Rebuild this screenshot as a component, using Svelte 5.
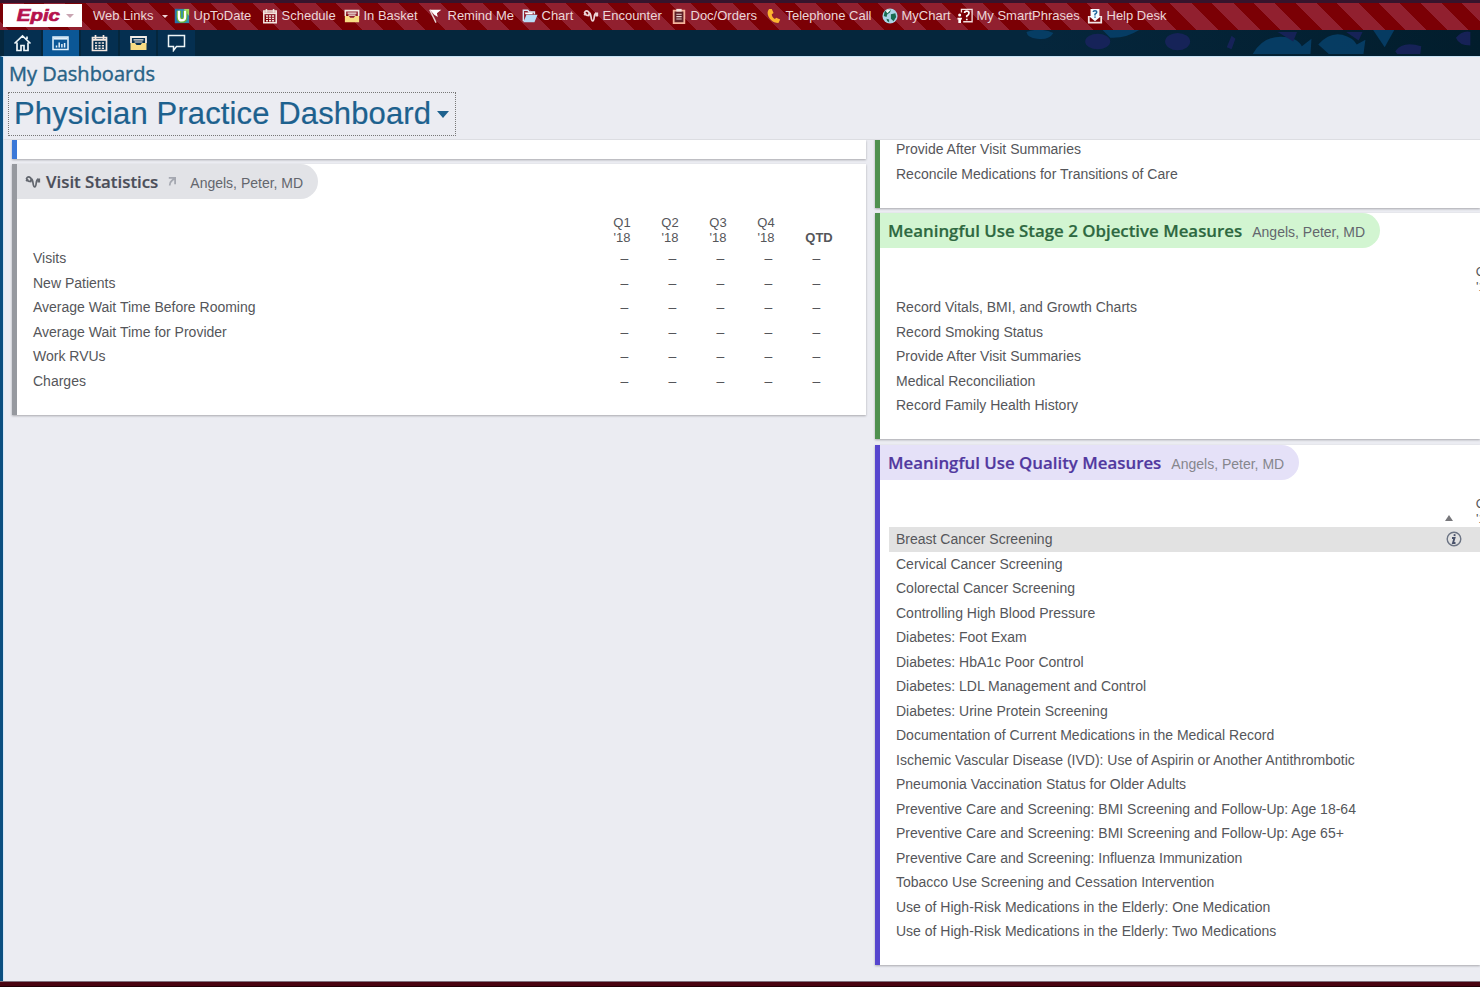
<script lang="ts">
	interface ICard {
		title: string;
		color: string;
		rows: string[];
	}

	const links = [
		{ icon: 'uptodate', label: 'UpToDate' },
		{ icon: 'calendar', label: 'Schedule' },
		{ icon: 'inbox', label: 'In Basket' },
		{ icon: 'flag', label: 'Remind Me' },
		{ icon: 'folder', label: 'Chart' },
		{ icon: 'stethoscope', label: 'Encounter' },
		{ icon: 'clipboard', label: 'Doc/Orders' },
		{ icon: 'phone', label: 'Telephone Call' },
		{ icon: 'globe', label: 'MyChart' },
		{ icon: 'phrases', label: 'My SmartPhrases' },
		{ icon: 'help', label: 'Help Desk' }
	];
	const tabs = ['home', 'dashboard', 'calendar', 'inbox', 'chat'];
	const provider = 'Angels, Peter, MD';
	const quarters = ['Q1', 'Q2', 'Q3', 'Q4'];
	const stats = [
		'Visits',
		'New Patients',
		'Average Wait Time Before Rooming',
		'Average Wait Time for Provider',
		'Work RVUs',
		'Charges'
	];
	const cards: ICard[] = [
		{
			title: 'Meaningful Use Stage 2 Objective Measures',
			color: 'green',
			rows: [
				'Record Vitals, BMI, and Growth Charts',
				'Record Smoking Status',
				'Provide After Visit Summaries',
				'Medical Reconciliation',
				'Record Family Health History'
			]
		},
		{
			title: 'Meaningful Use Quality Measures',
			color: 'purple',
			rows: [
				'Breast Cancer Screening',
				'Cervical Cancer Screening',
				'Colorectal Cancer Screening',
				'Controlling High Blood Pressure',
				'Diabetes: Foot Exam',
				'Diabetes: HbA1c Poor Control',
				'Diabetes: LDL Management and Control',
				'Diabetes: Urine Protein Screening',
				'Documentation of Current Medications in the Medical Record',
				'Ischemic Vascular Disease (IVD): Use of Aspirin or Another Antithrombotic',
				'Pneumonia Vaccination Status for Older Adults',
				'Preventive Care and Screening: BMI Screening and Follow-Up: Age 18-64',
				'Preventive Care and Screening: BMI Screening and Follow-Up: Age 65+',
				'Preventive Care and Screening: Influenza Immunization',
				'Tobacco Use Screening and Cessation Intervention',
				'Use of High-Risk Medications in the Elderly: One Medication',
				'Use of High-Risk Medications in the Elderly: Two Medications'
			]
		}
	];
	let selected = $state('Breast Cancer Screening');
</script>

{#snippet icon(name: string)}
	<svg class="icon" viewBox="0 0 18 18" fill="none">
		{#if name === 'uptodate'}
			<rect x="1" y="1" width="16" height="16" fill="#338fae" />
			<path d="M1 1h5v16H1z" fill="#2874ad" />
			<path d="M11 1h6v8z" fill="#a5d85a" />
			<path d="M5.5 3v7q0 4 3.5 4t3.5-4V3" stroke="#6fb92f" stroke-width="5" />
			<path d="M5.5 3v7q0 4 3.5 4t3.5-4V3" stroke="#fff" stroke-width="2.6" />
		{:else if name === 'calendar'}
			<path d="M2 3.5h14v13H2zM5 1v4M13 1v4" stroke="#f3e6df" stroke-width="1.7" />
			<path d="M2 5.8h14" stroke="#f3e6df" stroke-width="2" />
			<path d="M4.5 9h9M4.5 11.7h9M4.5 14.3h9" stroke="#f3e6df" stroke-width="1.6" stroke-dasharray="2.2 1.2" />
		{:else if name === 'inbox'}
			<path d="M1.5 9V3h15v6" stroke="#f3ece6" stroke-width="1.8" />
			<path d="M4 5.8h10M5 8h8" stroke="#f3ece6" stroke-width="1.2" />
			<path d="M1 9h4.5l1.5 2h4l1.5-2H17v7H1z" fill="#f8dc83" />
		{:else if name === 'flag'}
			<path d="M2 2h13l-5 4 1 4-4-2.5z" fill="#fff" />
			<path d="m2 2 7 14.5" stroke="#e8d5d5" stroke-width="1.6" />
		{:else if name === 'folder'}
			<path d="M1.5 15V2.5h5l1.5 2h6V7" stroke="#d8e7f5" stroke-width="1.6" />
			<path d="M3 5h9v2H4z" fill="#fff" />
			<path d="M5 7.5h12.5L14 16H1.5z" fill="#b9dcf6" />
		{:else if name === 'stethoscope'}
			<path
				d="M1.500 6q1-3.500 3.500-2.500 3 1.500 1.500 5l-3-.5M7 5.500c3 0 1 9 4 9 2.500 0 .5-8 3.500-8.500"
				stroke="currentColor"
				stroke-width="1.900"
			/>
			<circle cx="2.500" cy="7" r="1.600" fill="currentColor" />
			<path d="M13.500 5h3.500v4.500h-3z" fill="currentColor" />
		{:else if name === 'clipboard'}
			<path d="M3 3h12v14H3z" fill="#5d2027" stroke="#f5b29b" stroke-width="2" />
			<path d="M6 1h6v3H6z" fill="#f4e4df" />
			<path d="M6 7h6M6 9.7h6M6 12.4h6" stroke="#e9d8d5" stroke-width="1.3" />
		{:else if name === 'phone'}
			<path d="M3.500 1c-5 6 2 16 10.500 16l2-4-4.500-2-1.500 1.500C7.500 11 6.500 8.500 6.500 7L8.500 5.500 6.500 1z" fill="#fbb42f" />
		{:else if name === 'globe'}
			<circle cx="9" cy="9" r="8.500" fill="#acd5e7" />
			<path d="M3 4q4-3 7-2l-1 3-3 2-1 3-3-1zM10 7l5-1 1 4-3 5-3-3zM5 12l3 1v3q-3-1-3-4z" fill="#196c50" />
			<path d="M4 3q3-2 6-1L6 6z" fill="#eef8f7" />
		{:else if name === 'phrases'}
			<path d="M5 5V1.500h12v14H7" stroke="#f3dede" stroke-width="1.5" />
			<circle cx="3" cy="8" r="1.700" fill="#fff" />
			<path d="M.5 11h5v2h-1v4h-3v-4h-1z" fill="#fff" />
			<path d="M8.500 5.500q0-2 2.500-2t2.500 2-2.500 3.500v1.500M11 12v1.700" stroke="#fff" stroke-width="1.900" />
		{:else if name === 'help'}
			<path d="M2 9v7.500h14V9" stroke="#f3e5e5" stroke-width="2" />
			<path d="M4 1h10v8h2l-7 6-7-6h2z" fill="#f4fbff" />
			<path d="M7 4.500q0-1.500 2-1.500t2 1.500-2 2.500v1.500M9 9.500v1.500" stroke="#20669c" stroke-width="1.700" />
		{:else if name === 'home'}
			<path d="M1 9.500 9 2l8 7.500M3.500 8.500v8h4v-5h3v5h4v-8M13.500 5V2.500" stroke="#eef5f8" stroke-width="1.700" />
		{:else if name === 'dashboard'}
			<path d="M1.500 3h15v12.500h-15z" stroke="#e4f2fb" stroke-width="1.500" />
			<path d="M2 4.500h14" stroke="#e4f2fb" stroke-width="2.200" />
			<path d="M5 13.500v-2M7.700 13.500V8.500M10.400 13.500V10M13.100 13.500V9" stroke="#e4f2fb" stroke-width="1.500" />
		{:else if name === 'chat'}
			<path d="M1 1.500h16v11H9L6 16.500v-4H1z" stroke="#eef5f8" stroke-width="1.500" />
		{/if}
	</svg>
{/snippet}

<div class="app">
	<header class="toolbar">
		<button class="epic"><b>Epic</b><span class="caret"></span></button>
		<button class="web-links">Web Links<span class="caret"></span></button>
		{#each links as link}
			<button class="link">{@render icon(link.icon)}<span>{link.label}</span></button>
		{/each}
	</header>
	<nav class="tabs">
		{#each tabs as tab}
			<button class="tab" class:active={tab === 'dashboard'} aria-label={tab}>
				{@render icon(tab)}
			</button>
		{/each}
		<svg class="fish" viewBox="0 0 520 27">
			<g fill="#07436f">
				<path d="M59 2q14-5 28 1-5 8-17 6Q60 8 59 2zM138 0h38q-14 9-30 8z" />
				<path d="M294 25q10-18 29-18 17 0 22 10l10-8-1 16zM362 15q12-13 25-10 11 3 15 10l9-5-2 15h-36z" />
				<path d="M419 0h22l-10 18z" />
			</g>
			<g fill="#1b2361">
				<ellipse cx="133" cy="12" rx="13" ry="8" />
				<ellipse cx="216" cy="12" rx="13" ry="9" />
				<path d="m267 18 5-12 4 3-4 11zM320 2h20l-4 10zM391 2h17l-4 9zM442 22q8-11 27-5l-1 8h-24zM505 8q7-8 15-6v14q-12 0-15-8z" />
			</g>
		</svg>
	</nav>
	<main class="page">
		<h2>My Dashboards</h2>
		<button class="picker">Physician Practice Dashboard<span class="caret"></span></button>
		<div class="board">
			<div class="column">
				<section class="card blue"></section>
				<section class="card gray">
					<h3 class="chip">
						{@render icon('stethoscope')}
						<span class="title">Visit Statistics</span>
						<svg class="jump" viewBox="0 0 10 10" fill="none">
							<path d="M2 1h7v7M9 1 5 4.500Q3 6 3 9.500" stroke="#a5a8b1" stroke-width="2" />
						</svg>
						<span class="provider">{provider}</span>
					</h3>
					<div class="stat head">
						<span></span>
						{#each quarters as q}<span>{q}<br />'18</span>{/each}
						<b>QTD</b>
					</div>
					{#each stats as stat}
						<div class="stat row">
							<span>{stat}</span>
							{#each { length: 5 } as _}<span class="value">–</span>{/each}
						</div>
					{/each}
				</section>
			</div>
			<div class="column">
				<section class="card green clipped">
					<div class="row">Provide After Visit Summaries</div>
					<div class="row">Reconcile Medications for Transitions of Care</div>
				</section>
				{#each cards as card}
					<section class="card {card.color}">
						<h3 class="chip">
							<span class="title">{card.title}</span>
							<span class="provider">{provider}</span>
						</h3>
						<div class="head measures">
							{#if card.color === 'purple'}<span class="sort"></span>{/if}
							<span class="quarter">Q1<br />'18</span>
						</div>
						{#each card.rows as row}
							<div class="row" class:selected={row === selected}>
								<span>{row}</span>
								{#if row === selected}
									<svg class="info" viewBox="0 0 16 16" fill="none">
										<circle cx="8" cy="8" r="6.800" stroke="#6c7484" stroke-width="1.400" />
										<path d="M6 7h2.500L7 12h2.500M8.800 3.300l-.4 1.700" stroke="#48516a" stroke-width="1.900" />
									</svg>
								{/if}
							</div>
						{/each}
					</section>
				{/each}
			</div>
		</div>
	</main>
	<footer></footer>
</div>

<style>
	:global(body) {
		overflow: hidden;
	}
	.app {
		display: flex;
		flex-direction: column;
		width: 1480px;
		height: 987px;
		overflow: hidden;
		font-family: 'Liberation Sans', Arial, sans-serif;
		font-size: 14px;
		color: #55565a;
		background: #04243a;
	}
	button {
		border: 0;
		padding: 0;
		background: none;
		font: inherit;
		color: inherit;
		text-align: left;
		white-space: nowrap;
	}
	.icon {
		flex: none;
		width: 16px;
		height: 16px;
	}
	.caret {
		display: inline-block;
		border: 3px solid transparent;
		border-top-color: currentColor;
		border-bottom: 0;
	}
	.toolbar {
		box-sizing: border-box;
		height: 30px;
		display: grid;
		grid-template-columns: 88px 86px 88px 82px 84px 94px 61px 88px 95px 116px 75px 130px 100px;
		align-items: center;
		padding-bottom: 2px;
		border-top: 3px solid #36142c;
		background: repeating-linear-gradient(45deg, #91202f 0 6px, #7b0005 6px 20.300px, #91202f 20.300px 29.500px);
		color: #ecd6d8;
		font-size: 13px;
	}
	.epic {
		display: flex;
		align-items: center;
		justify-content: flex-end;
		box-sizing: border-box;
		width: 79px;
		height: 23px;
		margin-left: 3px;
		padding-right: 8px;
		background: #fff;
		color: #c9a5b2;
	}
	.epic b {
		margin-right: 6px;
		font-size: 17px;
		line-height: 20px;
		font-style: italic;
		color: #b5124d;
		-webkit-text-stroke: 0.7px #b5124d;
		transform: scaleX(1.2);
		transform-origin: right;
	}
	.epic .caret {
		border-width: 4px 4px 0;
	}
	.web-links {
		padding-left: 5px;
	}
	.web-links .caret {
		margin: 0 0 2px 9px;
	}
	.link {
		display: flex;
		align-items: center;
		gap: 3.500px;
	}
	.tabs {
		display: flex;
		position: relative;
		box-sizing: border-box;
		height: 26px;
		padding-left: 4px;
		gap: 2px;
		background: linear-gradient(90deg, #05263c 70%, #021d2c);
	}
	.tab {
		display: flex;
		align-items: center;
		justify-content: center;
		width: 36.600px;
		background: #052f50;
	}
	.tab .icon {
		width: 19px;
		height: 18px;
	}
	.tab.active {
		background: #0b5796;
	}
	.fish {
		position: absolute;
		right: 0;
		top: 0;
		width: 520px;
		height: 26px;
		opacity: 0.8;
	}
	.page {
		flex: 1;
		display: flex;
		flex-direction: column;
		min-height: 0;
		border-left: 3px solid #0b4f80;
		border-top: 1px solid #c9e3f5;
		background: #ebecf2;
		box-shadow: inset 1px 0 #d3e6f6;
	}
	h2 {
		margin: 0 0 0 6px;
		height: 35px;
		line-height: 33px;
		font-family: 'Open Sans', 'Noto Sans', sans-serif;
		font-size: 20px;
		font-weight: 400;
		-webkit-text-stroke: 0.4px #286286;
		color: #286286;
	}
	.picker {
		display: flex;
		align-items: center;
		box-sizing: border-box;
		width: 448px;
		height: 44px;
		margin: 0 0 3px 5px;
		padding-left: 5px;
		border: 1px dotted #777;
		font-size: 31px;
		letter-spacing: 0.130px;
		color: #1d618e;
		-webkit-text-stroke: 0.2px #1d618e;
	}
	.picker .caret {
		margin-left: 6px;
		border-width: 7px 6px 0;
	}
	.board {
		flex: 1;
		min-height: 0;
		display: grid;
		grid-template-columns: 854px 605px;
		column-gap: 9px;
		padding-left: 9px;
		overflow: hidden;
		border-top: 1px solid #dcdde2;
	}
	.column {
		display: flex;
		flex-direction: column;
		gap: 5.500px;
	}
	.card {
		padding-bottom: 21.500px;
		border-left: 5px solid;
		background: #fff;
		box-shadow: 0 1px 2px #a9a9ae;
	}
	.clipped {
		margin-top: -3px;
	}
	.blue {
		height: 18.500px;
		padding: 0;
		border-color: #3a78d8;
	}
	.gray {
		border-color: #96999f;
	}
	.green {
		border-color: #4f904f;
	}
	.purple {
		border-color: #5746ce;
	}
	.chip {
		display: flex;
		align-items: center;
		box-sizing: border-box;
		width: fit-content;
		height: 35px;
		margin: 0;
		padding: 0 15px 0 8px;
		border-radius: 0 18px 18px 0;
		font-size: 14px;
		font-weight: 400;
		background: #e2e3e7;
	}
	.title {
		font-family: 'Open Sans', 'Noto Sans', sans-serif;
		font-size: 16.850px;
		font-weight: 600;
		-webkit-text-stroke: 0.2px currentColor;
		color: #4b4e59;
	}
	.provider {
		margin: 3px 0 0 10px;
		color: #63666d;
	}
	.gray .icon {
		margin-right: 5px;
		color: #62666e;
	}
	.jump {
		width: 9px;
		height: 9px;
		margin: 0 4px 0 9px;
	}
	.green .chip {
		background: #d2f5d1;
	}
	.green .title {
		color: #2d6840;
	}
	.purple .chip {
		background: #e5e1f8;
	}
	.purple .title {
		color: #51389f;
	}
	.purple .provider {
		color: #86868d;
	}
	.head {
		box-sizing: border-box;
		height: 47.250px;
		padding-bottom: 1px;
		line-height: 14.500px;
		font-size: 13px;
		text-align: center;
	}
	.stat {
		display: grid;
		grid-template-columns: 565px repeat(5, 48px);
		margin-left: 16px;
	}
	.stat.head {
		align-items: end;
	}
	.head b {
		padding-left: 10px;
	}
	.row {
		height: 24.500px;
		line-height: 24.500px;
		white-space: nowrap;
	}
	.value {
		padding-left: 5px;
		text-align: center;
	}
	.column > .card > .row:not(.stat) {
		display: flex;
		align-items: center;
		margin-left: 9px;
		padding-left: 7px;
	}
	.row.selected {
		background: #e2e2e2;
	}
	.measures {
		display: flex;
		justify-content: flex-end;
		align-items: flex-end;
	}
	.sort {
		margin: 0 22px 5px 0;
		border: 4px solid transparent;
		border-top: 0;
		border-bottom: 6px solid #77777b;
	}
	.quarter {
		flex: none;
		width: 20px;
		margin-right: -14.500px;
	}
	.info {
		width: 16px;
		height: 16px;
		margin: 0 18px 0 auto;
	}
	footer {
		height: 6px;
		box-sizing: border-box;
		border-top: 1px solid #81717d;
		border-bottom: 1px solid #210006;
		background: #4a0411;
	}
</style>
